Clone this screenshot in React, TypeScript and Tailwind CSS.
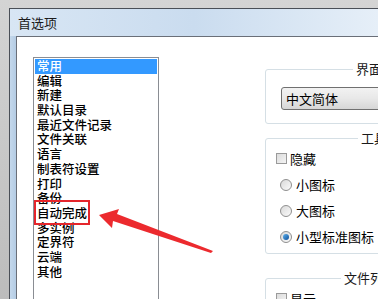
import React from 'react';

const ITEMS = [
  '常用',
  '编辑',
  '新建',
  '默认目录',
  '最近文件记录',
  '文件关联',
  '语言',
  '制表符设置',
  '打印',
  '备份',
  '自动完成',
  '多实例',
  '定界符',
  '云端',
  '其他',
];

const CJK = { fontFamily: '"Noto Sans CJK SC", "Noto Sans", sans-serif' };

function Radio({ checked }: { checked?: boolean }) {
  return (
    <span className="flex h-[12px] w-[12px] shrink-0 items-center justify-center rounded-full border border-[#8f8f8f] bg-gradient-to-br from-[#d9d9d9] to-[#fbfbfb]">
      {checked && <span className="h-[6px] w-[6px] rounded-full bg-gradient-to-br from-[#5fb2ec] to-[#0b4f9a]" />}
    </span>
  );
}

function Check() {
  return <span className="h-[11px] w-[11px] shrink-0 border border-[#9a9a9a] bg-gradient-to-br from-[#dcdcdc] to-[#f4f4f4]" />;
}

function Group({ title, titleLeft, className, children }: { title: string; titleLeft: string; className: string; children?: React.ReactNode }) {
  return (
    <div className={`relative w-[150px] rounded-[3px] border border-[#d5dfe5] ${className}`}>
      <span className={`absolute top-[-10px] bg-white pl-[3px] text-[13px] leading-[18px] text-[#1a1a1a] whitespace-nowrap ${titleLeft}`}>{title}</span>
      {children}
    </div>
  );
}

export default function App() {
  return (
    <div className="relative h-[299px] w-[378px] overflow-hidden bg-gradient-to-b from-[#d4d4d4] to-[#bcbcbc] pl-[9px] pt-[8px]" style={CJK}>
      <div className="flex h-[320px] flex-col border-l border-t border-[#4a4f57]">
        {/* title bar */}
        <div className="flex h-[27px] shrink-0 items-center bg-gradient-to-r from-[#d8e6f4] via-[#cadcef] to-[#e6eff8] pl-[8px] text-[13px] text-[#1b1b1b]">
          首选项
        </div>
        <div className="flex flex-1">
          <div className="w-[6px] shrink-0 bg-gradient-to-r from-[#c4d8ec] to-[#b4cce4]" />
          <div className="flex min-w-0 flex-1 border-l border-t border-[#6a6f78] bg-white">
            {/* list box */}
            <div className="ml-[16px] mt-[20px] w-[126px] shrink-0 border border-[#8a8d93] px-[1px] pt-[1px]">
              {ITEMS.map((item, i) => (
                <div
                  key={item}
                  className={`h-[14.7px] pl-[2px] text-[12.5px] font-medium leading-[14.7px] whitespace-nowrap ${i === 0 ? 'bg-[#3399ff] text-white' : 'text-black'}`}
                >
                  <span className={i === 10 ? 'outline-2 outline-offset-[1px] outline-[#e5262c]' : ''}>{item}</span>
                </div>
              ))}
            </div>
            {/* right panel */}
            <div className="ml-[106px] flex shrink-0 flex-col pt-[32px]">
              <Group title="界面语言" titleLeft="left-[87px]" className="h-[55px]">
                <div className="ml-[15px] mt-[17px] flex h-[23px] w-[140px] items-center rounded-[3px] border border-[#707070] bg-gradient-to-b from-[#f2f2f2] via-[#e8e8e8] to-[#d6d6d6] pl-[4px] text-[13px] text-black">
                  中文简体
                </div>
              </Group>
              <Group title="工具栏" titleLeft="left-[92px]" className="mt-[14px] h-[116px]">
                <div className="flex flex-col pl-[10px] pt-[9px] text-[13px] text-black">
                  <div className="flex h-[21px] items-center gap-[3px]">
                    <Check />
                    <span>隐藏</span>
                  </div>
                  <div className="mt-[5px] flex h-[21px] items-center gap-[4px] pl-[4px]">
                    <Radio />
                    <span>小图标</span>
                  </div>
                  <div className="mt-[5px] flex h-[21px] items-center gap-[4px] pl-[4px]">
                    <Radio />
                    <span>大图标</span>
                  </div>
                  <div className="mt-[5px] flex h-[21px] items-center gap-[4px] pl-[4px]">
                    <Radio checked />
                    <span>小型标准图标</span>
                  </div>
                </div>
              </Group>
              <Group title="文件列表" titleLeft="left-[75px]" className="mt-[24px] h-[40px]">
                <div className="flex items-center gap-[3px] pl-[10px] pt-[10px] text-[13px] text-black">
                  <Check />
                  <span>显示</span>
                </div>
              </Group>
            </div>
          </div>
        </div>
      </div>
      {/* annotation arrow */}
      <svg className="pointer-events-none absolute left-0 top-0" width="378" height="299" viewBox="0 0 378 299">
        <polygon points="99,215 119,209 117,214 213,251 211,253 113,221 112,228" fill="#ec2a2e" />
      </svg>
    </div>
  );
}
